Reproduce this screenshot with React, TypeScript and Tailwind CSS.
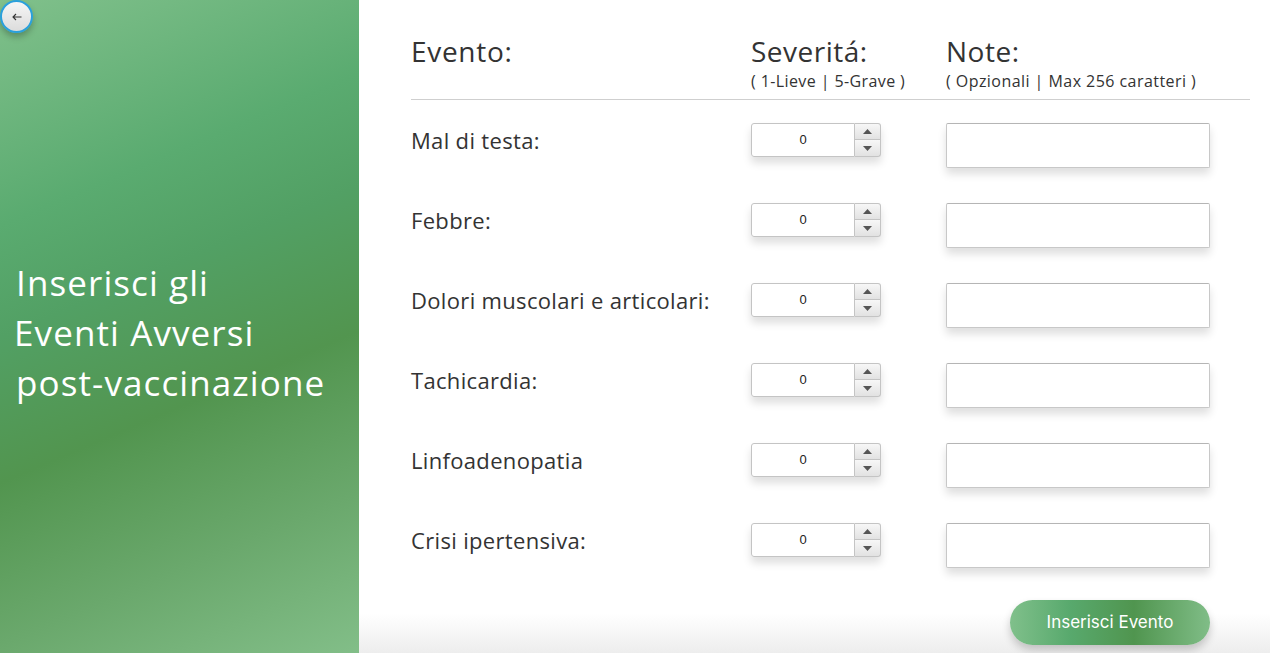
import React from "react";

const rows = [
  "Mal di testa:",
  "Febbre:",
  "Dolori muscolari e articolari:",
  "Tachicardia:",
  "Linfoadenopatia",
  "Crisi ipertensiva:",
];

function Spinner() {
  return (
    <div className="flex h-[34px] w-[130px] shadow-[0_6px_8px_rgba(0,0,0,0.13)] rounded-[3px]">
      <div className="flex h-full w-[104px] items-center justify-center rounded-l-[3px] border border-[#c4c4c4] bg-white font-['Liberation_Sans',sans-serif] text-[13px] text-[#222]">
        0
      </div>
      <div className="flex h-full w-[26px] flex-col">
        <div className="flex h-1/2 items-center justify-center rounded-tr-[3px] border border-l-0 border-[#c4c4c4] bg-gradient-to-b from-[#f7f7f7] to-[#e2e2e2]">
          <svg width="9" height="5" viewBox="0 0 9 5">
            <polygon points="4.5,0 9,5 0,5" fill="#555" />
          </svg>
        </div>
        <div className="flex h-1/2 items-center justify-center rounded-br-[3px] border border-l-0 border-t-0 border-[#c4c4c4] bg-gradient-to-b from-[#f7f7f7] to-[#e2e2e2]">
          <svg width="9" height="5" viewBox="0 0 9 5">
            <polygon points="0,0 9,0 4.5,5" fill="#555" />
          </svg>
        </div>
      </div>
    </div>
  );
}

export default function App() {
  return (
    <div className="flex h-[653px] w-[1270px] overflow-hidden font-['Open_Sans',sans-serif]">
      <div className="relative flex h-full w-[359px] shrink-0 flex-col justify-center bg-[linear-gradient(157deg,#80c08b_0%,#5aab70_28%,#52a064_42%,#52954f_60%,#6aa86c_80%,#82be88_100%)] pl-[16px] pt-[12px]">
        <button className="absolute left-0 top-0 flex h-[33px] w-[33px] items-center justify-center rounded-full border-2 border-[#2aa0dc] bg-gradient-to-b from-[#f6f6f6] to-[#dcdcdc] shadow-[0_4px_6px_rgba(0,0,0,0.25)]">
          <svg width="10" height="8" viewBox="0 0 10 8" fill="none" stroke="#333" strokeWidth="1.1">
            <path d="M9.5 4H1M4 1L1 4l3 3" />
          </svg>
        </button>
        <div className="text-[35px] leading-[50px] tracking-[1.1px] text-white">
          <div>Inserisci gli</div>
          <div className="-ml-[2px]">Eventi Avversi</div>
          <div>post-vaccinazione</div>
        </div>
      </div>
      <div className="flex h-full flex-1 flex-col bg-[linear-gradient(to_bottom,#ffffff_94%,#ededed_100%)] pl-[52px] pr-[20px] pt-[32px] text-[#333]">
        <div className="flex border-b border-[#cfcfcf] pb-[7px]">
          <div className="w-[340px] text-[28px] leading-[38px] tracking-[0.7px]">Evento:</div>
          <div className="w-[195px]">
            <div className="text-[28px] leading-[38px] tracking-[0.5px]">Severitá:</div>
            <div className="text-[16px] leading-[22px] tracking-[0.4px]">( 1-Lieve | 5-Grave )</div>
          </div>
          <div>
            <div className="text-[28px] leading-[38px] tracking-[0.5px]">Note:</div>
            <div className="text-[16px] leading-[22px] tracking-[0.45px]">( Opzionali | Max 256 caratteri )</div>
          </div>
        </div>
        <div className="mt-[23px] flex flex-col">
          {rows.map((r) => (
            <div key={r} className="flex h-[80px] items-start">
              <div className="flex h-[34px] w-[340px] items-center text-[22px] tracking-[0.33px]">{r}</div>
              <div className="w-[195px]">
                <Spinner />
              </div>
              <div className="h-[45px] w-[264px] rounded-[2px] border border-[#c8c8c8] border-t-[#b5b5b5] bg-white shadow-[0_6px_8px_rgba(0,0,0,0.13)]" />
            </div>
          ))}
        </div>
        <div className="-mt-[3px] flex w-[799px] justify-end">
          <button className="h-[45px] w-[200px] rounded-full bg-[linear-gradient(90deg,#80c08b_0%,#58a96d_30%,#50954f_62%,#80bd87_100%)] font-['Inter',sans-serif] text-[17px] font-normal text-white shadow-[0_5px_8px_rgba(0,0,0,0.2)]">
            Inserisci Evento
          </button>
        </div>
      </div>
    </div>
  );
}
